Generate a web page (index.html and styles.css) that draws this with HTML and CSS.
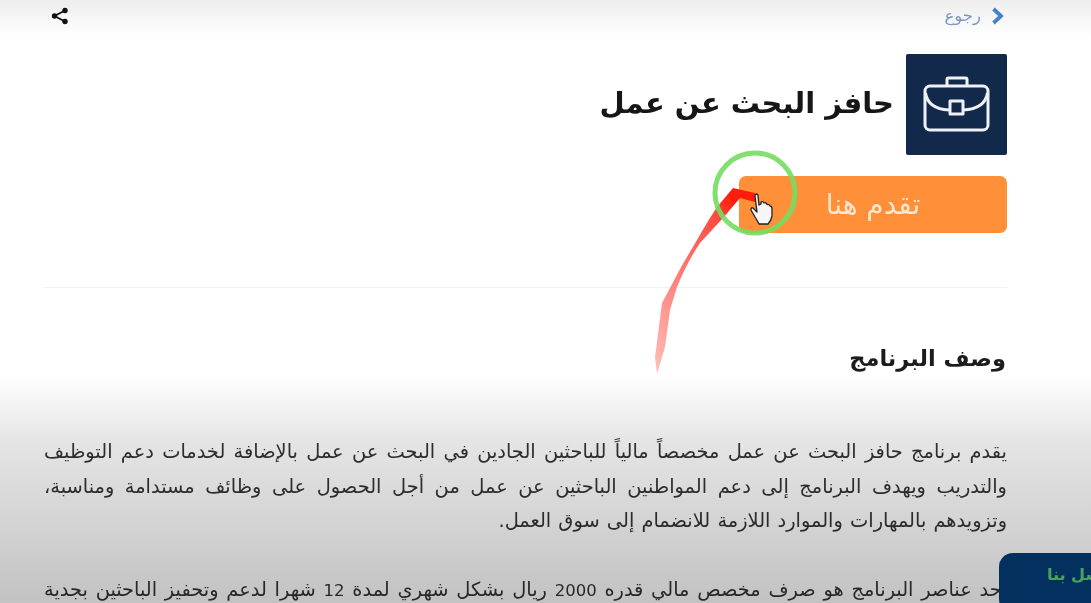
FILE: index.html
```html
<!DOCTYPE html>
<html lang="ar" dir="rtl">
  <head>
    <meta charset="UTF-8" />
    <meta name="viewport" content="width=device-width, initial-scale=1.0" />
    <title>حافز البحث عن عمل</title>
    <link rel="stylesheet" href="styles.css">
  </head>
  <body>
    <div class="page">
      <div class="top-bar">
        <a class="back-link" href="#">
          <svg class="back-icon" viewBox="0 0 13 18" width="13" height="18">
            <path d="M2.5 2 L10 9 L2.5 16" fill="none" stroke="#4a86cf" stroke-width="3.8" />
          </svg>
          <span>رجوع</span>
        </a>
        <svg class="share-icon" viewBox="0 0 20 20" width="20" height="20">
          <path d="M15 4.5 L4.5 10 L15 15.5" fill="none" stroke="#111" stroke-width="1.8" />
          <circle cx="15" cy="4.5" r="2.7" fill="#111" />
          <circle cx="4.500" cy="10" r="2.7" fill="#111" />
          <circle cx="15" cy="15.5" r="2.7" fill="#111" />
        </svg>
      </div>

      <div class="program-head">
        <div class="program-icon">
          <svg viewBox="0 0 101 101" width="101" height="101">
            <g fill="none" stroke="#eef2f6" stroke-width="3" stroke-linejoin="round">
              <path d="M41 31 V25.500 Q41 24 42.500 24 H59.500 Q61 24 61 25.500 V31" />
              <rect x="19" y="32" width="63" height="44" rx="5" />
              <path d="M19.500 39 Q22 55 43 56 M57 56 Q79 55 81.500 39" />
              <rect x="44" y="47" width="13" height="13" />
            </g>
          </svg>
        </div>
        <h1 class="program-title">حافز البحث عن عمل</h1>
      </div>

      <a class="apply-btn" href="#">تقدم هنا</a>

      <hr class="divider" />

      <h2 class="section-title">وصف البرنامج</h2>
      <p class="section-text">يقدم برنامج حافز البحث عن عمل مخصصاً مالياً للباحثين الجادين في البحث عن عمل بالإضافة لخدمات دعم التوظيف والتدريب ويهدف البرنامج إلى دعم المواطنين الباحثين عن عمل من أجل الحصول على وظائف مستدامة ومناسبة، وتزويدهم بالمهارات والموارد اللازمة للانضمام إلى سوق العمل.</p>
      <p class="section-text section-text-next">أحد عناصر البرنامج هو صرف مخصص مالي قدره <span class="num">2000</span> ريال بشكل شهري لمدة <span class="num">12</span> شهرا لدعم وتحفيز الباحثين بجدية</p>
    </div>

    <!-- grey fade from the video frame -->
    <div class="fade"></div>

    <a class="contact-tab" href="#"><span>تواصل بنا</span></a>

    <!-- annotation drawn over the recording -->
    <svg class="annotation" viewBox="0 0 1091 603" width="1091" height="603">
      <defs>
        <linearGradient id="tail" x1="0" y1="1" x2="0.7" y2="0">
          <stop offset="0" stop-color="#ffc0bc" />
          <stop offset="0.45" stop-color="#ff7f78" />
          <stop offset="0.85" stop-color="#ff4a40" />
          <stop offset="1" stop-color="#ff1c0c" />
        </linearGradient>
      </defs>
      <path d="M657 374 L655 357 L662 303 C 672 285, 680 268, 687 257 C 697 240, 707 222, 717 207 L733 188 L755 193 L755 202 L740 198 L723 218 L700 243 C 690 258, 683 272, 677 287 L670 310 L665 347 Z" fill="url(#tail)" />
      <circle cx="755" cy="193" r="40" fill="none" stroke="#74dd62" stroke-width="5" opacity="0.9" />
      <path d="M755 196 Q755 194 756.500 194 Q758 194 758 196 L759 205 L761 204 L761 202 Q763 201 764 203 Q766 202 767 204.500 Q769 204 770 206 Q772 206 772 209 L772 216 Q771 221 768 224 L759 224 Q757 220 755 217 L751 210 Q751 207 753 208 L757 212 Z" fill="#f6f6f6" stroke="#222" stroke-width="1.3" stroke-linejoin="round" />
    </svg>
  </body>
</html>
```

FILE: styles.css
```css
html,
body {
  height: 100%;
}

body {
  margin: 0;
  background: #fff;
  font-family: "DejaVu Sans", sans-serif;
  color: #1c1c1c;
  overflow: hidden;
}

a {
  text-decoration: none;
}

.page {
  padding: 0 84px 0 44px;
  height: 603px;
  box-sizing: border-box;
  overflow: hidden;
  filter: blur(0.6px);
}

.top-bar {
  display: flex;
  justify-content: space-between;
  align-items: center;
  height: 31px;
}

.back-link {
  display: flex;
  align-items: center;
  gap: 10px;
  padding-right: 3px;
  color: #7d9bcb;
  font-size: 16.5px;
}

.share-icon {
  margin-left: 6px;
}

.program-head {
  display: flex;
  align-items: center;
  gap: 12px;
  margin-top: 23px;
}

.program-icon {
  width: 101px;
  height: 101px;
  background: #13294b;
  border-radius: 2px;
}

.program-title {
  margin: 0 0 3px;
  font-size: 29px;
  font-weight: 700;
  color: #161616;
}

.apply-btn {
  display: flex;
  align-items: center;
  justify-content: center;
  width: 268px;
  height: 57px;
  margin-top: 21px;
  background: #ff8f38;
  border-radius: 7px;
  color: #fde6cf;
  font-size: 28px;
}

.divider {
  border: 0;
  border-top: 1px solid #f2f2f2;
  margin: 54px 0 0;
}

.section-title {
  margin: 57px 1px 0 0;
  font-size: 22.5px;
  font-weight: 700;
  color: #1c1c1c;
}

.section-text {
  margin: 64px 0 0;
  font-size: 19.4px;
  word-spacing: 1px;
  line-height: 34.5px;
  text-align: justify;
  color: #333;
}

.section-text-next {
  margin-top: 34px;
  text-align-last: justify;
}

.num {
  font-size: 16.5px;
}

.fade {
  position: absolute;
  inset: 0;
  pointer-events: none;
  background:
    linear-gradient(to bottom, rgba(0, 0, 0, 0.07), rgba(0, 0, 0, 0) 36px),
    linear-gradient(to bottom, rgba(0, 0, 0, 0) 375px, rgba(0, 0, 0, 0.1) 440px, rgba(0, 0, 0, 0.24) 603px);
}

.contact-tab {
  position: absolute;
  left: 999px;
  top: 553px;
  width: 140px;
  height: 60px;
  background: #04305f;
  border-radius: 14px;
  color: #4aa35a;
  font-size: 16px;
  font-weight: 700;
}

.contact-tab span {
  position: absolute;
  left: 48px;
  top: 12px;
  white-space: nowrap;
}

.annotation {
  position: absolute;
  left: 0;
  top: 0;
  pointer-events: none;
  filter: blur(0.5px);
}
```
